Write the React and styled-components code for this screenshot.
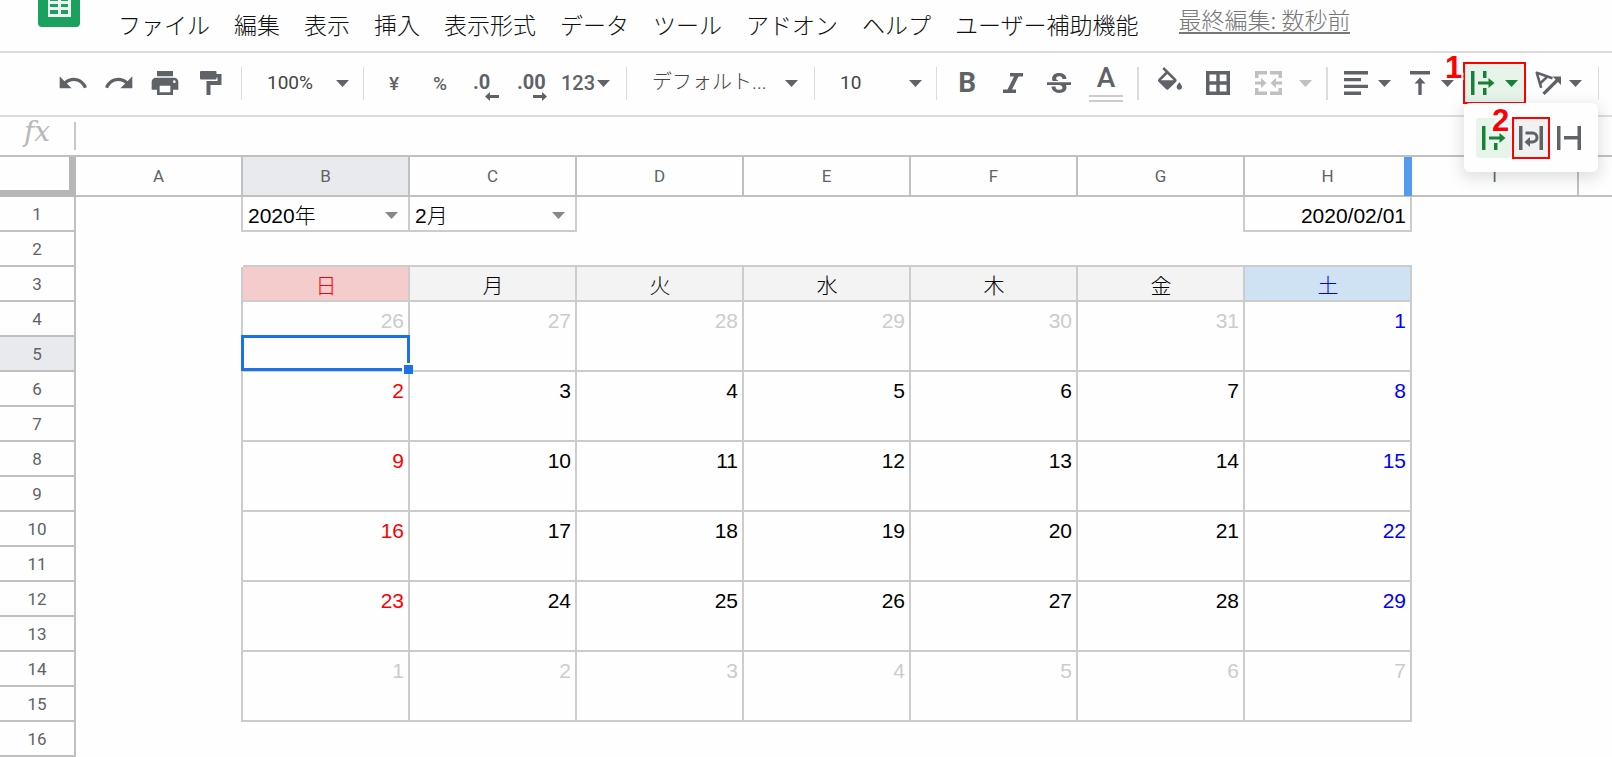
import React, { useState } from 'react';
import styled, { createGlobalStyle, css } from 'styled-components';

const GlobalStyle = createGlobalStyle`
  * {
    box-sizing: border-box;
  }

  body {
    margin: 0;
    background: #fefefe;
    font-family: Roboto, 'Noto Sans CJK JP', sans-serif;
    overflow: hidden;
  }

  button, select, input {
    margin: 0;
    padding: 0;
    border: 0;
    background: none;
    font-family: inherit;
    color: inherit;
  }
`;

const Page = styled.div`
  display: flex;
  flex-direction: column;
`;

const Header = styled.header`
  display: flex;
  align-items: flex-start;
  height: 53px;
  padding-left: 38px;
  border-bottom: 2px solid #dadce0;
`;

const Logo = styled.svg`
  flex: none;
  width: 42px;
  height: 27px;
  margin-right: 38px;
`;

const Menu = styled.nav`
  display: flex;
  gap: 24px;
  padding-top: 7px;
`;

const MenuItem = styled.button`
  font-family: 'Noto Sans CJK JP', sans-serif;
  font-size: 23px;
  font-weight: 300;
  line-height: 34px;
  color: #111;
  white-space: nowrap;
`;

const LastEdit = styled.a`
  margin: 7px 0 0 40px;
  border-bottom: 2px solid #777;
  font-family: 'Noto Sans CJK JP', sans-serif;
  font-size: 23px;
  font-weight: 300;
  line-height: 25px;
  color: #777;
  text-decoration: none;
  white-space: nowrap;
`;

const Toolbar = styled.div`
  display: flex;
  align-items: center;
  height: 64px;
  padding: 0 0 2px 50px;
  border-bottom: 2px solid #dadce0;
  color: #5f6368;
`;

const Separator = styled.span`
  flex: none;
  width: ${(props) => props.$size || 1}px;
  height: 33px;
  margin: 0 7px;
  background: #dadce0;
`;

const IconButton = styled.button`
  display: flex;
  flex: none;
  flex-direction: column;
  align-items: center;
  justify-content: center;
  width: ${(props) => (props.$wide ? 48 : 46)}px;
  height: 42px;
  font-size: 19px;
  font-weight: 500;
`;

const Letter = styled.span`
  font-size: 28px;
  font-weight: ${(props) => props.$weight};
  line-height: 28px;
`;

const ColorBars = styled.span`
  width: 34px;
  height: 7px;
  margin-top: 3px;
  border: solid #ccc;
  border-width: 2px 0;
`;

const Decimal = styled.span`
  display: flex;
  flex-direction: column;
  align-items: flex-start;
  width: ${(props) => props.$width}px;
  padding-top: 8px;
  font-size: 20px;
  font-weight: 700;
  line-height: 19px;

  svg {
    align-self: flex-end;
  }
`;

const SplitButton = styled.button`
  display: flex;
  flex: none;
  align-items: center;
  gap: ${(props) => props.$gap || 10}px;
  height: 42px;
  padding: ${(props) => props.$pad || '0 9px'};
  font-size: 20px;
  font-weight: 500;
  color: ${(props) => (props.disabled ? '#c0c0c0' : 'inherit')};
  ${(props) => props.$active && css`
    padding: 0 6px;
    border: 2px solid #f00;
    background: #e6f4ea;
    color: #188038;
  `}
`;

const Picker = styled.label`
  display: flex;
  flex: none;
  align-items: center;
  width: ${(props) => props.$width}px;
  padding: 0 ${(props) => props.$right || 7}px 0 18px;
`;

const PickerSelect = styled.select`
  flex: 1;
  min-width: 0;
  height: 34px;
  padding-bottom: 2px;
  appearance: none;
  font-size: ${(props) => (props.$light ? 20 : 19)}px;
  font-weight: ${(props) => (props.$light ? 300 : 400)};
  color: #444;
`;

const WrapMenu = styled.div`
  position: relative;
  flex: none;
`;

const Popup = styled.div`
  position: absolute;
  z-index: 3;
  top: 41px;
  left: 1px;
  display: flex;
  align-items: center;
  gap: 1px;
  height: 69px;
  padding: 0 12px;
  border-radius: 6px;
  background: #fefefe;
  box-shadow: 0 4px 14px 3px rgba(60, 64, 67, 0.15);
  color: #5f6368;
`;

const PopupItem = styled.button`
  display: flex;
  align-items: center;
  justify-content: center;
  width: 35px;
  height: 40px;
  border-radius: 3px;
  ${(props) => props.$current && css`
    background: #e6f4ea;
    color: #188038;
  `}
  ${(props) => props.$marked && css`
    width: 38px;
    height: 42px;
    border: 2px solid #f00;
    border-radius: 0;
    background: #f1f1f1;
  `}
`;

const StepNumber = styled.span`
  position: absolute;
  z-index: 4;
  top: ${(props) => props.$top}px;
  left: ${(props) => props.$left}px;
  font: bold 31px/30px 'Liberation Sans', Arial, sans-serif;
  color: #f00;
  text-shadow: 0 0 2px #fff, 2px 2px 0 #fff, -2px 2px 0 #fff, 2px -2px 0 #fff, -2px -2px 0 #fff;
`;

const FormulaBar = styled.div`
  display: flex;
  height: 38px;
`;

const FormulaLabel = styled.label`
  width: 76px;
  height: 28px;
  margin-top: 5px;
  padding-left: 24px;
  border-right: 2px solid #c8c8c8;
  font: italic 28px/20px 'DejaVu Serif', serif;
  color: #b8b8b8;
`;

const FormulaInput = styled.input`
  flex: 1;
  min-width: 0;
  padding: 0 8px;
  font-size: 20px;
  outline: none;
`;

const Sheet = styled.table`
  width: 100%;
  border-top: 2px solid #c0c0c0;
  border-spacing: 0;
  table-layout: fixed;
`;

const HeadCol = styled.col`
  width: 76px;
`;

const DataCol = styled.col`
  width: 167px;
`;

const Corner = styled.td`
  height: 40px;
  padding: 0;
  border: solid #b7b7b7;
  border-width: 0 7px 7px 0;
`;

const ColHead = styled.th`
  position: relative;
  height: 40px;
  padding: 0;
  border: solid #c0c0c0;
  border-width: 0 2px 2px 0;
  background: ${(props) => (props.$selected ? '#e8eaed' : 'transparent')};
  font-size: 17px;
  font-weight: 400;
  line-height: 38px;
  color: #5f6368;

  &:last-child {
    border-right-width: 0;
  }
`;

const ResizeBar = styled.span`
  position: absolute;
  top: 0;
  right: -2px;
  width: 8px;
  height: 39px;
  background: #549bf0;
`;

const RowHead = styled.th`
  height: 35px;
  padding: 1px 0 0;
  border: solid #c0c0c0;
  border-width: 0 2px 2px 0;
  background: ${(props) => (props.$selected ? '#e8eaed' : 'transparent')};
  font-size: 17px;
  font-weight: 400;
  line-height: 32px;
  color: #5f6368;
`;

const Cell = styled.td`
  position: relative;
  height: 35px;
  padding: 4px 4px 0 5px;
  border: solid #ccc;
  border-width: 0 ${(props) => (props.$right ? 2 : 0)}px ${(props) => (props.$bottom ? 2 : 0)}px 0;
  background: ${(props) => props.$fill || 'transparent'};
  font-family: 'Liberation Sans', 'Noto Sans CJK JP', sans-serif;
  font-size: 21px;
  font-weight: 300;
  line-height: 29px;
  text-align: ${(props) => props.$align || 'right'};
  vertical-align: top;
  color: ${(props) => props.$color || '#000'};
`;

const CellPicker = styled.label`
  display: flex;
  align-items: center;
  height: 29px;
  padding-right: 6px;
  color: #888;
`;

const CellSelect = styled.select`
  flex: 1;
  min-width: 0;
  height: 29px;
  appearance: none;
  font-size: 21px;
  font-weight: 300;
  line-height: 29px;
  color: #000;
`;

const Selection = styled.div`
  position: absolute;
  z-index: 1;
  top: -2px;
  right: -2px;
  bottom: -1px;
  left: -2px;
  border: 3px solid #1a73e8;
`;

const FillHandle = styled.span`
  position: absolute;
  right: -6px;
  bottom: -6px;
  width: 11px;
  height: 11px;
  border: solid #fefefe;
  border-width: 2px 0 0 2px;
  background: #1a73e8;
`;

const Caret = () => (
  <svg width="13" height="7" viewBox="0 0 13 7" fill="currentColor" aria-hidden="true">
    <path d="M0 0h13L6.500 7z" />
  </svg>
);

// icons on the 24 unit material grid
const MaterialIcon = ({ d, box = '0 0 24 24' }) => (
  <svg width="32" height="32" viewBox={box} fill="currentColor" aria-hidden="true">
    <path d={d} />
  </svg>
);

const Icon = ({ w, h, d }) => (
  <svg width={w} height={h} viewBox={`0 0 ${w} ${h}`} fill="currentColor" aria-hidden="true">
    <path fillRule="evenodd" d={d} />
  </svg>
);

const OverflowIcon = () => (
  <Icon w={24} h={24} d="M0 0h3.500v24H0zM12 0h3.500v7H12zM12 17h3.500v7H12zM7 10.400h10.500V7l6 5-6 5v-3.400H7z" />
);

const WrapIcon = () => (
  <svg width="24" height="24" viewBox="0 0 24 24" fill="currentColor" aria-hidden="true">
    <path d="M0 0h3.500v24H0zM20.500 0H24v24h-3.500z" />
    <path d="M6.500 7h7a4.500 4.500 0 0 1 0 9H10" fill="none" stroke="currentColor" strokeWidth="3" />
    <path d="M5.500 16l5.500-5v10z" />
  </svg>
);

const ClipIcon = () => (
  <Icon w={24} h={24} d="M0 0h3.500v24H0zM20.500 0H24v24h-3.500v-10.500H7v-3.500h13.500z" />
);

const RotateIcon = () => (
  <svg width="27" height="24" viewBox="0 0 27 24" aria-hidden="true">
    <g fill="none" stroke="currentColor">
      <path d="M17.500 7.200L1.800 1.800l4.400 15" strokeWidth="2.600" strokeLinejoin="round" />
      <path d="M12.500 5.500L5 12.500" strokeWidth="2.400" />
      <path d="M8.500 23L22.500 9" strokeWidth="3.200" />
    </g>
    <path d="M17.500 5.500H26V14z" fill="currentColor" />
  </svg>
);

const menuItems = ['ファイル', '編集', '表示', '挿入', '表示形式', 'データ', 'ツール', 'アドオン', 'ヘルプ', 'ユーザー補助機能'];

const columns = ['A', 'B', 'C', 'D', 'E', 'F', 'G', 'H', 'I', 'J'];

const weekdays = ['日', '月', '火', '水', '木', '金', '土'];

const weeks = [
  [26, 27, 28, 29, 30, 31, 1],
  [2, 3, 4, 5, 6, 7, 8],
  [9, 10, 11, 12, 13, 14, 15],
  [16, 17, 18, 19, 20, 21, 22],
  [23, 24, 25, 26, 27, 28, 29],
  [1, 2, 3, 4, 5, 6, 7],
];

const rows = Array.from({ length: 16 }, (_, i) => i + 1);

const dayColor = (week, day) => {
  if ((week === 0 && day < 6) || week === 5) return '#ccc';
  if (day === 0) return '#f00';
  return day === 6 ? '#00f' : '#000';
};

// column 0 is A, the calendar takes 1 to 7
const cellProps = (row, col) => {
  const day = col - 1;
  const inside = day >= 0 && day < 7;
  if (row === 1) {
    return { $right: [0, 1, 2, 6, 7].includes(col), $bottom: [1, 2, 7].includes(col) };
  }
  if (row === 2) return { $bottom: inside };
  if (row === 3 && inside) {
    const fills = { 0: '#f4cccc', 6: '#cfe2f3' };
    const colors = { 0: '#f00', 6: '#00f' };
    return {
      $right: true, $bottom: true, $align: 'center', $fill: fills[day] || '#f3f3f3', $color: colors[day],
    };
  }
  if (row < 16) {
    const week = Math.floor((row - 4) / 2);
    return { $right: col < 8, $bottom: inside && row % 2 === 1, $color: inside ? dayColor(week, day) : undefined };
  }
  return {};
};

const CellContent = ({ row, col }) => {
  if (row === 1 && (col === 1 || col === 2)) {
    return (
      <CellPicker>
        <CellSelect aria-label={col === 1 ? '年' : '月'}>
          <option>{col === 1 ? '2020年' : '2月'}</option>
        </CellSelect>
        <Caret />
      </CellPicker>
    );
  }
  if (row === 1 && col === 7) return '2020/02/01';
  if (row === 3) return weekdays[col - 1] || null;
  if (row === 5 && col === 1) return <Selection><FillHandle /></Selection>;
  if (row >= 4 && row < 16 && row % 2 === 0 && col > 0) return weeks[(row - 4) / 2][col - 1];
  return null;
};

const App = () => {
  const [formula, setFormula] = useState('');

  return (
    <Page>
      <GlobalStyle />
      <Header>
        <Logo viewBox="0 0 42 27" aria-hidden="true">
          <path d="M0 0h42v23a4 4 0 0 1-4 4H4a4 4 0 0 1-4-4z" fill="#1aa15f" />
          <path d="M10 0h23v17H10z" fill="#f1f1f1" />
          <path d="M12 0h8v1h-8zM23 0h7v1h-7zM12 4h8v3h-8zM23 4h7v3h-7zM12 10h8v4h-8zM23 10h7v4h-7z" fill="#1aa15f" />
        </Logo>
        <Menu>
          {menuItems.map((item) => <MenuItem key={item}>{item}</MenuItem>)}
        </Menu>
        <LastEdit href="#history">最終編集: 数秒前</LastEdit>
      </Header>
      <Toolbar>
        <IconButton aria-label="元に戻す">
          <MaterialIcon d="M12.500 8c-2.650 0-5.050.990-6.900 2.600L2 7v9h9l-3.620-3.620c1.390-1.160 3.160-1.880 5.120-1.880 3.540 0 6.550 2.310 7.600 5.500l2.370-.780C21.080 11.030 17.150 8 12.500 8z" />
        </IconButton>
        <IconButton aria-label="やり直し">
          <MaterialIcon d="M18.400 10.600C16.550 8.990 14.150 8 11.500 8c-4.650 0-8.580 3.030-9.960 7.220L3.900 16c1.050-3.190 4.050-5.500 7.600-5.500 1.950 0 3.730.720 5.120 1.880L13 16h9V7l-3.600 3.600z" />
        </IconButton>
        <IconButton aria-label="印刷">
          <MaterialIcon d="M19 8H5c-1.660 0-3 1.340-3 3v6h4v4h12v-4h4v-6c0-1.660-1.340-3-3-3zm-3 11H8v-5h8v5zm3-7c-.550 0-1-.450-1-1s.450-1 1-1 1 .450 1 1-.450 1-1 1zm-1-9H6v4h12V3z" />
        </IconButton>
        <IconButton aria-label="書式を貼り付け">
          <Icon w={22} h={24} d="M1 0h14.500q1 0 1 1v2h5v11h-11v10h-4V10h11V6.500h-1v1q0 1-1 1H1q-1 0-1-1V1q0-1 1-1z" />
        </IconButton>
        <Separator />
        <Picker $width={107}>
          <PickerSelect aria-label="ズーム"><option>100%</option></PickerSelect>
          <Caret />
        </Picker>
        <Separator />
        <IconButton>¥</IconButton>
        <IconButton>%</IconButton>
        <IconButton>
          <Decimal $width={26}>
            .0
            <Icon w={14} h={9} d="M0 4.500L5 0v3h9v3H5v3z" />
          </Decimal>
        </IconButton>
        <IconButton>
          <Decimal $width={30}>
            .00
            <Icon w={14} h={9} d="M14 4.500L9 0v3H0v3h9v3z" />
          </Decimal>
        </IconButton>
        <SplitButton $gap={2} $pad="0 9px 0 6px">
          123
          <Caret />
        </SplitButton>
        <Separator />
        <Picker $width={173} $right={9}>
          <PickerSelect aria-label="フォント" $light><option>デフォルト...</option></PickerSelect>
          <Caret />
        </Picker>
        <Separator />
        <Picker $width={107}>
          <PickerSelect aria-label="フォントサイズ"><option>10</option></PickerSelect>
          <Caret />
        </Picker>
        <Separator />
        <IconButton><Letter $weight={700}>B</Letter></IconButton>
        <IconButton aria-label="斜体">
          <Icon w={20} h={20} d="M7 0h13v3.500h-4.500L9 16.500h4V20H0v-3.500h4.500L11 3.500H7z" />
        </IconButton>
        <IconButton aria-label="取り消し線">
          <MaterialIcon
            box="0 -1.500 24 24"
            d="M6.850 7.080C6.850 4.370 9.450 3 12.240 3c1.640 0 3 .490 3.900 1.280.770.650 1.460 1.730 1.460 3.240h-3.010c0-.310-.050-.590-.150-.850-.290-.860-1.200-1.280-2.250-1.280-1.860 0-2.340 1.020-2.340 1.700 0 .480.250.880.740 1.210.380.250.770.480 1.410.700H7.390c-.210-.340-.540-.890-.540-1.920zM21 12v-2H3v2h9.620c1.150.450 1.960.750 1.960 1.970 0 1-.810 1.670-2.280 1.670-1.540 0-2.930-.540-2.930-2.510H6.400c0 .550.080 1.130.240 1.580.810 2.290 3.290 3.300 5.670 3.300 2.270 0 5.300-.890 5.300-4.050 0-.300-.010-1.160-.480-1.940H21V12z"
          />
        </IconButton>
        <IconButton $wide>
          <Letter $weight={500}>A</Letter>
          <ColorBars />
        </IconButton>
        <Separator $size={2} />
        <IconButton $wide aria-label="塗りつぶしの色">
          <MaterialIcon d="M16.560 8.940L7.620 0 6.210 1.410l2.380 2.380-5.150 5.150c-.590.590-.590 1.540 0 2.120l5.500 5.500c.290.290.680.440 1.060.440s.770-.150 1.060-.440l5.500-5.500c.590-.580.590-1.530 0-2.120zM5.210 10L10 5.210 14.790 10H5.210zM19 11.500s-2 2.170-2 3.500c0 1.100.900 2 2 2s2-.900 2-2c0-1.330-2-3.500-2-3.500z" />
        </IconButton>
        <IconButton $wide aria-label="枠線">
          <Icon w={24} h={24} d="M0 0h24v24H0zM3.500 3.500v6.800h6.800V3.500zM13.700 3.500v6.800h6.800V3.500zM3.500 13.700v6.800h6.800v-6.800zM13.700 13.700v6.800h6.800v-6.800z" />
        </IconButton>
        <SplitButton disabled $gap={17} $pad="0 7px 0 13px" aria-label="セルを結合">
          <Icon w={27} h={24} d="M0 0h12v3.500H3.500V7H0zM15 0h12v7h-3.500V3.500H15zM0 24h12v-3.500H3.500V17H0zM15 24h12v-7h-3.500v3.500H15zM0 10.500h6V7l5.500 5L6 17v-3.500H0zM27 10.500h-6V7l-5.500 5 5.500 5v-3.500h6z" />
          <Caret />
        </SplitButton>
        <Separator $size={2} />
        <SplitButton aria-label="水平方向の配置">
          <Icon w={24} h={24} d="M0 0h24v3.500H0zM0 7h17v3.200H0zM0 13.700h24v3.200H0zM0 20.500h17V24H0z" />
          <Caret />
        </SplitButton>
        <SplitButton aria-label="垂直方向の配置">
          <Icon w={22} h={24} d="M1 0h20v3.500H1zM11 6.500l5.500 6h-3.800V24H9.300V12.500H5.500z" />
          <Caret />
        </SplitButton>
        <WrapMenu>
          <SplitButton $active aria-label="テキストを折り返す">
            <OverflowIcon />
            <Caret />
          </SplitButton>
          <StepNumber $top={-9} $left={-18}>1</StepNumber>
          <Popup>
            <PopupItem $current aria-label="はみ出す"><OverflowIcon /></PopupItem>
            <PopupItem $marked aria-label="折り返す"><WrapIcon /></PopupItem>
            <PopupItem aria-label="切り詰める"><ClipIcon /></PopupItem>
          </Popup>
          <StepNumber $top={44} $left={29}>2</StepNumber>
        </WrapMenu>
        <SplitButton $gap={7} aria-label="テキストの回転">
          <RotateIcon />
          <Caret />
        </SplitButton>
        <Separator />
      </Toolbar>
      <FormulaBar>
        <FormulaLabel htmlFor="formula">fx</FormulaLabel>
        <FormulaInput id="formula" value={formula} onChange={(event) => setFormula(event.target.value)} />
      </FormulaBar>
      <Sheet>
        <colgroup>
          <HeadCol />
          {columns.slice(0, 9).map((name) => <DataCol key={name} />)}
          <col />
        </colgroup>
        <thead>
          <tr>
            <Corner />
            {columns.map((name) => (
              <ColHead key={name} $selected={name === 'B'}>
                {name === 'J' ? null : name}
                {name === 'H' && <ResizeBar />}
              </ColHead>
            ))}
          </tr>
        </thead>
        <tbody>
          {rows.map((row) => (
            <tr key={row}>
              <RowHead $selected={row === 5}>{row}</RowHead>
              {columns.map((name, col) => (
                <Cell key={name} {...cellProps(row, col)}>
                  {col < 8 && <CellContent row={row} col={col} />}
                </Cell>
              ))}
            </tr>
          ))}
        </tbody>
      </Sheet>
    </Page>
  );
};

export default App;
